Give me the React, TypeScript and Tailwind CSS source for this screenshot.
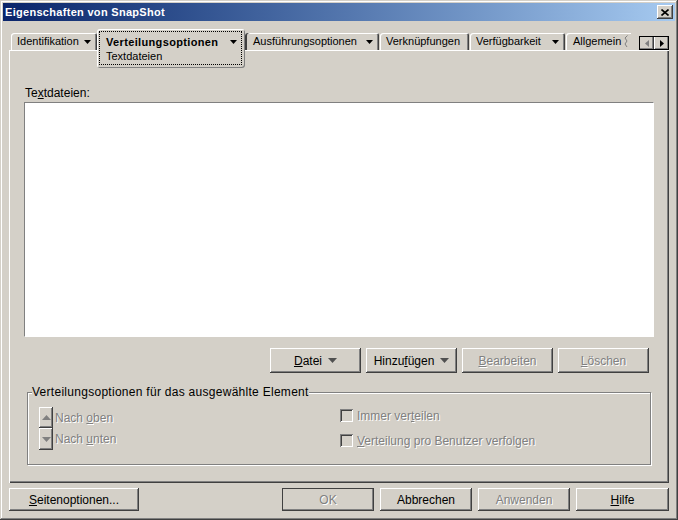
import type { ReactNode } from 'react';

const raised =
  'shadow-[inset_-1px_-1px_#404040,inset_1px_1px_#fff,inset_-2px_-2px_#808080,inset_2px_2px_#d4d0c8]';
const dis = 'text-[#808080] [text-shadow:1px_1px_0_#fff]';

function Tri({ dir = 'down', color = '#000', big = false }: { dir?: 'down' | 'up' | 'left' | 'right'; color?: string; big?: boolean }) {
  if (dir === 'down' || dir === 'up') {
    const w = big ? 9 : 7;
    const h = big ? 5 : 4;
    const d = dir === 'down' ? `M0 0h${w}L${w / 2} ${h}z` : `M0 ${h}h${w}L${w / 2} 0z`;
    return (
      <svg width={w} height={h} viewBox={`0 0 ${w} ${h}`} className="shrink-0">
        <path d={d} fill={color} />
      </svg>
    );
  }
  const d = dir === 'left' ? 'M4 0v7L0 3.5z' : 'M0 0v7L4 3.5z';
  return (
    <svg width={4} height={7} viewBox="0 0 4 7" className="shrink-0">
      <path d={d} fill={color} />
    </svg>
  );
}

function Btn({ children, className = '', disabled = false, def = false }: { children: ReactNode; className?: string; disabled?: boolean; def?: boolean }) {
  return (
    <div
      className={`flex items-center justify-center gap-[6px] text-[12px] ${raised} ${def ? 'outline outline-1 -outline-offset-1 outline-[#404040]' : ''} ${disabled ? dis : 'text-black'} ${className}`}
    >
      {children}
    </div>
  );
}

function Tab({ label, className, arrow = true }: { label: string; className: string; arrow?: boolean }) {
  return (
    <div
      className={`flex h-[17px] items-center justify-between rounded-tl-[3px] rounded-tr-[2px] pl-[6px] pr-[6px] text-[11px] shadow-[inset_1px_1px_#fff,inset_-1px_0_#404040,inset_-2px_0_#808080] ${className}`}
    >
      <span>{label}</span>
      {arrow && <Tri />}
    </div>
  );
}

function Check({ children }: { children: ReactNode }) {
  return (
    <div className="flex h-[13px] items-center gap-[4px]">
      <div className="h-[13px] w-[13px] bg-[#d4d0c8] shadow-[inset_1px_1px_#808080,inset_-1px_-1px_#fff,inset_2px_2px_#404040]" />
      <span className={`text-[12px] leading-[14px] ${dis}`}>{children}</span>
    </div>
  );
}

export default function App() {
  return (
    <div className="flex h-[520px] w-[678px] flex-col bg-[#d4d0c8] p-[3px] font-['Liberation_Sans',Arial,sans-serif] text-black shadow-[inset_-1px_-1px_#404040,inset_1px_1px_#d4d0c8,inset_-2px_-2px_#808080,inset_2px_2px_#fff]">
      {/* title bar */}
      <div className="flex h-[18px] items-center justify-between bg-linear-to-r from-[#0a246a] to-[#a6caf0] pl-[2px] pr-[2px]">
        <span className="text-[11px] font-bold tracking-[0.3px] text-white">Eigenschaften von SnapShot</span>
        <div className={`flex h-[14px] w-[16px] items-center justify-center bg-[#d4d0c8] ${raised}`}>
          <svg width="8" height="7" viewBox="0 0 8 7">
            <path d="M0.5 0.5l7 6M7.5 0.5l-7 6" stroke="#000" strokeWidth="1.6" />
          </svg>
        </div>
      </div>

      <div className="flex flex-1 flex-col px-[6px] pt-[8px]">
        {/* tab row */}
        <div className="flex h-[21px] items-end pl-[2px]">
          <Tab label="Identifikation" className="w-[86px]" />
          <div className="relative z-10 h-[39px] w-[148px] self-start rounded-[3px] bg-[#d4d0c8] p-[2px] pr-[3px] shadow-[inset_1px_1px_#fff,inset_-1px_-1px_#808080]">
            <div className="h-[34px] border border-dotted border-black pl-[6px] pr-[4px] pt-[3px] text-[11px] leading-[14px]">
              <div className="flex items-center justify-between">
                <span className="font-bold tracking-[0.35px]">Verteilungsoptionen</span>
                <Tri />
              </div>
              <div>Textdateien</div>
            </div>
          </div>
          <Tab label="Ausführungsoptionen" className="w-[134px] !shadow-[inset_2px_0_#404040,inset_1px_1px_#fff,inset_-1px_0_#404040,inset_-2px_0_#808080] pl-[8px]" />
          <Tab label="Verknüpfungen" arrow={false} className="ml-[1px] w-[89px]" />
          <Tab label="Verfügbarkeit" className="ml-[1px] w-[95px]" />
          <div className="ml-[1px] flex h-[17px] w-[65px] items-center justify-between rounded-tl-[3px] pl-[7px] pr-[3px] text-[11px] shadow-[inset_1px_1px_#fff]">
            <span>Allgemein</span>
            <svg width="4" height="13" viewBox="0 0 4 13">
              <path d="M3.5 0.5L1 3l2 3-2 3 2 3" fill="none" stroke="#808080" />
            </svg>
          </div>
          <div className="ml-[8px] flex h-[14px] w-[30px] outline outline-1 -outline-offset-1 outline-black">
            <div className={`flex h-full w-[15px] items-center justify-center ${raised}`}>
              <Tri dir="left" color="#808080" />
            </div>
            <div className={`flex h-full w-[15px] items-center justify-center ${raised}`}>
              <Tri dir="right" />
            </div>
          </div>
        </div>

        {/* tab panel */}
        <div className="flex h-[433px] flex-col pt-[36px] shadow-[inset_1px_1px_#fff,inset_-1px_-1px_#404040,inset_-2px_-2px_#808080]">
          <div className="ml-[16px] text-[12px] leading-[14px]">
            Te<span className="underline">x</span>tdateien:
          </div>
          <div className="ml-[15px] mt-[2px] h-[235px] w-[630px] border-b border-l border-r border-t border-b-white border-l-[#808080] border-r-white border-t-[#808080] bg-white" />

          <div className="mt-[11px] flex justify-end gap-[5px] pr-[20px]">
            <Btn className="h-[25px] w-[91px]">
              <span>
                <span className="underline">D</span>atei
              </span>
              <Tri big color="#505050" />
            </Btn>
            <Btn className="h-[25px] w-[91px]">
              <span>
                Hinzu<span className="underline">f</span>ügen
              </span>
              <Tri big color="#505050" />
            </Btn>
            <Btn disabled className="h-[25px] w-[91px]">
              <span>
                <span className="underline">B</span>earbeiten
              </span>
            </Btn>
            <Btn disabled className="h-[25px] w-[91px]">
              <span>
                <span className="underline">L</span>öschen
              </span>
            </Btn>
          </div>

          <fieldset className="ml-[18px] mt-[12px] h-[80px] w-[624px] border border-[#808080] p-0 shadow-[1px_1px_0_#fff,inset_1px_1px_0_#fff]">
            <legend className="ml-[4px] bg-[#d4d0c8] p-0 text-[12px] leading-[14px] tracking-[0.28px]">
              Verteilungsoptionen für das ausgewählte Element
            </legend>
            <div className="flex pl-[11px] pt-[8px]">
              <div className="flex w-[301px] flex-col">
                <div className="flex h-[21px] items-center">
                  <div className={`flex h-[21px] w-[14px] items-center justify-center ${raised}`}>
                    <Tri dir="up" big color="#808080" />
                  </div>
                  <span className={`ml-[2px] text-[12px] ${dis}`}>
                    Nach <span className="underline">o</span>ben
                  </span>
                </div>
                <div className="flex h-[22px] items-center">
                  <div className={`flex h-[22px] w-[14px] items-center justify-center ${raised}`}>
                    <Tri dir="down" big color="#808080" />
                  </div>
                  <span className={`ml-[2px] text-[12px] ${dis}`}>
                    Nach <span className="underline">u</span>nten
                  </span>
                </div>
              </div>
              <div className="flex flex-col gap-[12px] pt-[2px]">
                <Check>
                  Immer ver<span className="underline">t</span>eilen
                </Check>
                <Check>
                  <span className="underline">V</span>erteilung pro Benutzer verfolgen
                </Check>
              </div>
            </div>
          </fieldset>
        </div>

        {/* dialog buttons */}
        <div className="mt-[5px] flex justify-between">
          <Btn className="h-[23px] w-[130px]">
            <span>
              <span className="underline">S</span>eitenoptionen...
            </span>
          </Btn>
          <div className="flex gap-[6px]">
            <Btn disabled def className="h-[23px] w-[92px]">
              OK
            </Btn>
            <Btn className="h-[23px] w-[92px]">Abbrechen</Btn>
            <Btn disabled className="h-[23px] w-[92px]">
              Anwenden
            </Btn>
            <Btn className="h-[23px] w-[93px]">
              <span>
                <span className="underline">H</span>ilfe
              </span>
            </Btn>
          </div>
        </div>
      </div>
    </div>
  );
}
